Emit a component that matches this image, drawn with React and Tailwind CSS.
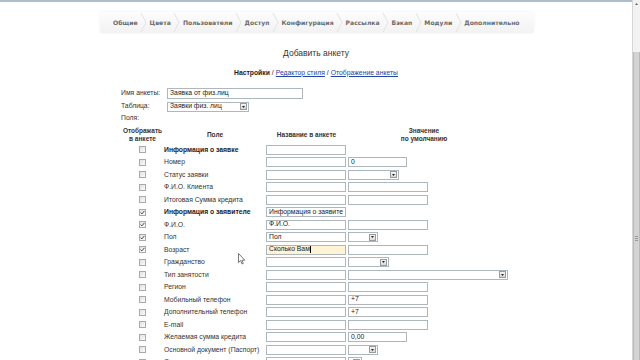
import React from "react";

const navItems = ["Общие", "Цвета", "Пользователи", "Доступ", "Конфигурация", "Рассылка", "Бэкап", "Модули", "Дополнительно"];

function Chevron() {
  return (
    <svg width="7" height="21" viewBox="0 0 7 21" className="mx-[2.5px] shrink-0">
      <path d="M1 1 L6 10.5 L1 20" fill="none" stroke="#e2e2e2" strokeWidth="1" />
    </svg>
  );
}

function Checkbox({ checked }) {
  return (
    <div className="w-[7px] h-[7px] border border-[#a9a9a9] bg-gradient-to-br from-[#e2e2e2] to-[#fbfbfb] flex items-center justify-center">
      {checked && (
        <svg width="5" height="5" viewBox="0 0 5 5">
          <path d="M0.6 2.6 L1.9 3.9 L4.4 0.9" fill="none" stroke="#4a4a4a" strokeWidth="1" />
        </svg>
      )}
    </div>
  );
}

function Input({ w, value, focus }) {
  return (
    <div
      className={`h-[10px] border border-[#aeb7bd] flex items-center pl-[2px] text-[6.8px] leading-none text-[#222] overflow-hidden whitespace-nowrap ${focus ? "bg-[#fff3d6]" : "bg-white"}`}
      style={{ width: w }}
    >
      {value}
      {focus && <span className="w-px h-[7px] bg-black ml-[0.5px]" />}
    </div>
  );
}

function Select({ w, value }) {
  return (
    <div
      className="h-[10px] border border-[#aeb7bd] bg-white flex items-center justify-between pl-[2px] pr-[1px] text-[6.8px] leading-none text-[#222] whitespace-nowrap"
      style={{ width: w }}
    >
      <span>{value}</span>
      <div className="w-[7px] h-[7px] border border-[#9a9a9a] bg-gradient-to-b from-[#f4f4f4] to-[#d9d9d9] flex items-center justify-center">
        <svg width="3" height="2" viewBox="0 0 3 2">
          <path d="M0 0 L3 0 L1.5 2 Z" fill="#222" />
        </svg>
      </div>
    </div>
  );
}

const rows = [
  { label: "Информация о заявке", bold: true, checked: false, name: "", val: null },
  { label: "Номер", checked: false, val: { t: "input", w: 59, v: "0" } },
  { label: "Статус заявки", checked: false, val: { t: "select", w: 51 } },
  { label: "Ф.И.О. Клиента", checked: false, val: { t: "input", w: 80 } },
  { label: "Итоговая Сумма кредита", checked: false, val: { t: "input", w: 80 } },
  { label: "Информация о заявителе", bold: true, checked: true, name: "Информация о заявите", val: null },
  { label: "Ф.И.О.", checked: true, name: "Ф.И.О.", val: { t: "input", w: 80 } },
  { label: "Пол", checked: true, name: "Пол", val: { t: "select", w: 30 } },
  { label: "Возраст", checked: true, name: "Сколько Вам", focus: true, val: { t: "input", w: 80 } },
  { label: "Гражданство", checked: false, val: { t: "select", w: 41 } },
  { label: "Тип занятости", checked: false, val: { t: "select", w: 160 } },
  { label: "Регион", checked: false, val: { t: "input", w: 80 } },
  { label: "Мобильный телефон", checked: false, val: { t: "input", w: 80, v: "+7" } },
  { label: "Дополнительный телефон", checked: false, val: { t: "input", w: 80, v: "+7" } },
  { label: "E-mail", checked: false, val: { t: "input", w: 80 } },
  { label: "Желаемая сумма кредита", checked: false, val: { t: "input", w: 59, v: "0,00" } },
  { label: "Основной документ (Паспорт)", checked: false, val: { t: "select", w: 30 } },
  { label: "Серия паспорта", checked: false, val: { t: "select", w: 14 } },
];

export default function App() {
  return (
    <div
      className="relative w-[640px] h-[360px] overflow-hidden bg-white flex items-start text-[#333]"
      style={{ fontFamily: '"Liberation Sans", Arial, sans-serif' }}
    >
      <div className="w-[632px] shrink-0">
        <div className="h-[2px] bg-[#aebdca]" />
        {/* nav */}
        <div className="mt-[10px] ml-[100px] w-[434px] h-[21px] flex items-center pl-[13px] bg-gradient-to-b from-[#fdfdfd] to-[#f2f2f2] rounded-[2px] shadow-[0_0_3px_rgba(0,0,0,0.06)] overflow-hidden">
          {navItems.map((n, i) => (
            <React.Fragment key={n}>
              <span
                className="text-[6.1px] font-bold text-[#6a6a6a] whitespace-nowrap"
                style={{ fontFamily: '"DejaVu Sans", Verdana, sans-serif' }}
              >
                {n}
              </span>
              {i < navItems.length - 1 && <Chevron />}
            </React.Fragment>
          ))}
        </div>
        {/* title */}
        <div className="mt-[10px] h-[20px] flex items-center justify-center text-[8.5px] text-[#333]">
          Добавить анкету
        </div>
        <div className="h-[20px] flex items-center justify-center text-[6.8px] text-[#222]">
          <span className="font-bold">Настройки</span>
          <span className="mx-[2px]">/</span>
          <span className="text-[#2444a8] underline">Редактор стиля</span>
          <span className="mx-[2px]">/</span>
          <span className="text-[#2444a8] underline">Отображение анкеты</span>
        </div>
        {/* form */}
        <div className="ml-[121px] mt-[4px] text-[6.8px] text-[#333]">
          <div className="h-[13px] flex items-center">
            <span className="w-[46px]">Имя анкеты:</span>
            <div className="h-[11px] w-[136px] border border-[#aeb7bd] flex items-center pl-[2px] text-[#222]">Заявка от физ.лиц</div>
          </div>
          <div className="h-[13px] flex items-center">
            <span className="w-[46px]">Таблица:</span>
            <Select w={82} value="Заявки физ. лиц" />
          </div>
          <div className="h-[11px] flex items-center">Поля:</div>
          {/* header */}
          <div className="h-[19.5px] pt-[3px] flex items-start font-bold text-[6.5px] text-[#333] leading-[8px]">
            <div className="w-[43px] text-center">Отображать<br />в анкете</div>
            <div className="w-[102px] text-center pt-[4px]">Поле</div>
            <div className="w-[81px] text-center pt-[4px]">Название в анкете</div>
            <div className="w-[154px] text-center">Значение<br />по умолчанию</div>
          </div>
          {rows.map((r, i) => (
            <div key={i} className="h-[12.5px] flex items-center">
              <div className="w-[43px] flex justify-center pr-[1px]">
                <Checkbox checked={r.checked} />
              </div>
              <div className={`w-[102px] whitespace-nowrap ${r.bold ? "font-bold text-[#222]" : ""}`}>{r.label}</div>
              <div className="w-[82px]">
                <Input w={80} value={r.name || ""} focus={r.focus} />
              </div>
              <div>
                {r.val && r.val.t === "input" && <Input w={r.val.w} value={r.val.v || ""} />}
                {r.val && r.val.t === "select" && <Select w={r.val.w} value="" />}
              </div>
            </div>
          ))}
        </div>
      </div>
      {/* scrollbar */}
      <div className="w-[8px] h-[360px] shrink-0 flex flex-col border-l border-[#d6d6d6]">
        <div className="h-[52px] shrink-0 bg-[#f2f2f2] flex justify-center pt-[3px]">
          <svg width="3" height="2" viewBox="0 0 3 2">
            <path d="M0 2 L3 2 L1.5 0 Z" fill="#666" />
          </svg>
        </div>
        <div className="flex-1 bg-[#d3d3d3] border-x border-[#b9b9b9] flex flex-col items-center pt-[184px]">
          <div className="w-[3px] h-px bg-[#999] mb-px" />
          <div className="w-[3px] h-px bg-[#999] mb-px" />
          <div className="w-[3px] h-px bg-[#999]" />
        </div>
      </div>
      {/* mouse pointer */}
      <svg className="absolute left-[238px] top-[253px]" width="8" height="12" viewBox="0 0 8 12">
        <path d="M0.5 0.5 L0.5 9.5 L2.6 7.6 L4 11 L5.3 10.4 L3.9 7.2 L6.8 7.2 Z" fill="#fff" stroke="#555" strokeWidth="0.8" />
      </svg>
    </div>
  );
}
